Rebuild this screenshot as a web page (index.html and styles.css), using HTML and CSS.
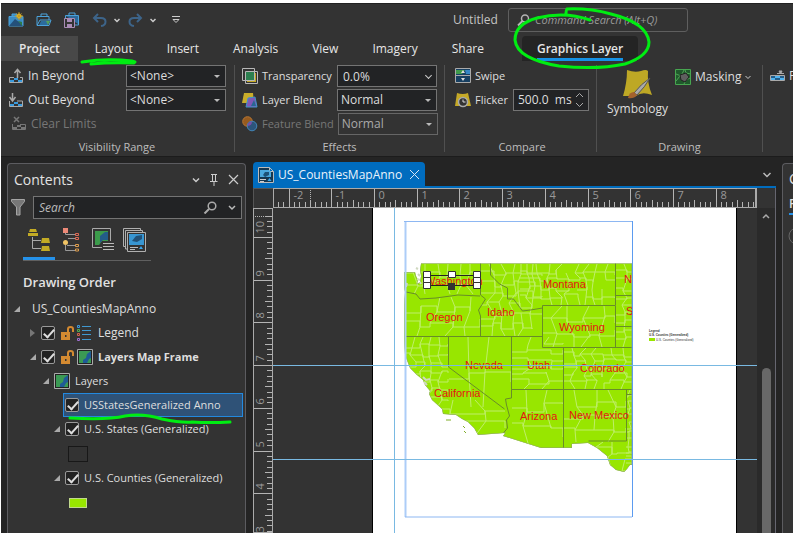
FILE: index.html
```html
<!DOCTYPE html>
<html lang="en">
<head>
<meta charset="utf-8">
<title>Untitled</title>
<link rel="stylesheet" href="styles.css">
</head>
<body>
<div class="app">
  <header class="titlebar">
    <div class="quick">
      <button class="qbtn" aria-label="New project"><svg width="16" height="16" viewBox="0 0 16 16"><path d="M4 4V2h5v2M1 4.500h14V14H1z" fill="#3c8cc4" stroke="#4ba3dc"/><path d="M1 14l6-7 4 3 4 4z" fill="#24507a"/><path d="M10 9l4 1v4z" fill="#2f7a45"/><circle cx="11" cy="4" r="2.500" fill="#e8bd2c"/><path d="M11 0v8M7 4h8M8.500 1.500l5 5M13.500 1.500l-5 5" stroke="#c79c1f"/></svg></button>
      <button class="qbtn" aria-label="Open"><svg width="16" height="16" viewBox="0 0 16 16"><path d="M5 4V2h6v2M1 13V4.500h12V8M1 13.500L4 8h11l-2 5.500z" fill="none" stroke="#4ba3dc"/><path d="M5 9h9l-2 4H3z" fill="#2c6b9c"/><path d="M10 9h4l-2 4z" fill="#55a05b"/></svg></button>
      <button class="qbtn" aria-label="Save"><svg width="16" height="16" viewBox="0 0 16 16"><path d="M5 3V1h6v2M1.500 7V3.500h13V13H11" fill="none" stroke="#4ba3dc"/><path d="M2 4h12v8z" fill="#2c6b9c"/><path d="M.500 6.500h10v9H.500z" fill="#333" stroke="#a98bb5"/><path d="M3 7h5v3H3zM3 12h5v3H3z" fill="#a98bb5"/></svg></button>
      <button class="qbtn undo" aria-label="Undo"><svg width="15" height="14" viewBox="0 0 15 14"><path d="M6 1L2 5l4 4M2 5h7c6 0 6 7 0 8" fill="none" stroke="#3d6489" stroke-width="2"/></svg></button>
      <svg class="chev" width="6" height="5" viewBox="0 0 6 5"><path d="M.500 1L3 3.500 5.500 1" fill="none" stroke="#ccc" stroke-width="1.500"/></svg>
      <button class="qbtn" aria-label="Redo"><svg width="15" height="14" viewBox="0 0 15 14"><path d="M9 1l4 4-4 4M13 5H6C0 5 0 12 6 13" fill="none" stroke="#3d6489" stroke-width="2"/></svg></button>
      <svg class="chev" width="6" height="5" viewBox="0 0 6 5"><path d="M.500 1L3 3.500 5.500 1" fill="none" stroke="#ccc" stroke-width="1.500"/></svg>
      <button class="qbtn custom" aria-label="Customize"><svg width="8" height="8" viewBox="0 0 8 8"><path d="M0 .500h8M1 3.500h6L4 6.500z" fill="none" stroke="#ccc"/></svg></button>
    </div>
    <span class="doc-title">Untitled</span>
    <label class="command"><svg width="13" height="12" viewBox="0 0 13 12"><circle cx="8" cy="4.500" r="3.500" fill="none" stroke="#b4b4b4" stroke-width="1.500"/><path d="M5.500 7L1 11.500" stroke="#b4b4b4" stroke-width="2"/></svg><input type="text" placeholder="Command Search (Alt+Q)" aria-label="Command Search"></label>
  </header>

  <nav class="tabs">
    <a href="#" class="project">Project</a><a href="#">Layout</a><a href="#">Insert</a><a href="#">Analysis</a><a href="#">View</a><a href="#">Imagery</a><a href="#">Share</a><a href="#" class="active"><span>Graphics Layer</span></a>
  </nav>

  <section class="ribbon">
    <div class="group">
      <div class="rows">
        <div class="row"><svg width="16" height="16" viewBox="0 0 16 16"><path d="M9.500 10V2M6.500 5l3-3.500L12.500 5" fill="none" stroke="#aaa" stroke-width="1.500"/><path d="M6 9.500H1.500v5h13v-5H12" fill="none" stroke="#aaa"/><path d="M2 12h4v2H2zM6 10h4v2H6zM10 12h4v2h-4z" fill="#3b9bdd"/></svg><label for="in">In Beyond</label><div class="pick"><select id="in"><option>&lt;None&gt;</option></select></div></div>
        <div class="row"><svg width="16" height="16" viewBox="0 0 16 16"><path d="M4.500 1v8M1.500 5l3 4 3-4" fill="none" stroke="#aaa" stroke-width="1.500"/><path d="M1.500 9v5.500h13V9H9" fill="none" stroke="#aaa"/><path d="M2 12h4v2H2zM6 10h4v2H6zM10 12h4v2h-4z" fill="#3b9bdd"/></svg><label for="out">Out Beyond</label><div class="pick"><select id="out"><option>&lt;None&gt;</option></select></div></div>
        <button class="row off clear" disabled><svg width="16" height="16" viewBox="0 0 16 16"><path d="M3 1l5 5M8 1L3 6" stroke="#777" stroke-width="1.500"/><path d="M1.500 8v5.500h13V8.500H9" fill="none" stroke="#777"/><path d="M2 11h4v2H2zM6 9h4v2H6zM10 11h4v2h-4z" fill="#777"/></svg>Clear Limits</button>
      </div>
      <h2>Visibility Range</h2>
    </div>
    <div class="group effects">
      <div class="rows">
        <div class="row"><svg width="16" height="16" viewBox="0 0 16 16"><path d="M5 5h9v9H5z" fill="#c4a823"/><path d="M4 4h8v9H4z" fill="#2c7f50"/><path d="M.500.500h12v12H.500zM3.500 3.500h12v12h-12z" fill="none" stroke="#b8b8b8"/></svg><label for="tr">Transparency</label><div class="pick thin"><input id="tr" type="text" value="0.0%"></div></div>
        <div class="row"><svg width="16" height="16" viewBox="0 0 16 16"><path d="M2 1l9 0 1 10-12 0z" fill="#c9ad2b"/><path d="M6 6l7-1 2 10H4z" fill="#8157b5" stroke="#3d95cc"/><path d="M12 8l2 6H9z" fill="#276793"/></svg><label for="lb">Layer Blend</label><div class="pick"><select id="lb"><option>Normal</option></select></div></div>
        <div class="row off"><svg width="16" height="16" viewBox="0 0 16 16"><circle cx="5.500" cy="5.500" r="4.800" fill="#965b20" stroke="#b87633"/><circle cx="10" cy="10" r="4.800" fill="#2c557c" stroke="#4386b8"/><path d="M5.500 10q0-4 4.500-4.500 0 4-4.500 4.500z" fill="#7a4fa8"/></svg><label for="fb">Feature Blend</label><div class="pick"><select id="fb" disabled><option>Normal</option></select></div></div>
      </div>
      <h2>Effects</h2>
    </div>
    <div class="group compare">
      <div class="rows">
        <button class="row"><svg width="16" height="16" viewBox="0 0 16 16"><path d="M1 1h14v14H1z" fill="#173f61"/><path d="M1 2h9l-3 4H1z" fill="#3f9b4c"/><path d="M10 2h5v4h-4z" fill="#3686c4"/><path d="M.500.500h15v14H.500zM0 7.500h16" fill="none" stroke="#aaa"/><path d="M8 2l2 3H6zM8 13l2-3H6z" fill="#ddd"/></svg>Swipe</button>
        <div class="row"><svg width="16" height="16" viewBox="0 0 16 16"><path d="M2 1q6 2 11 0l3 13H0z" fill="#c5a927"/><circle cx="8" cy="10" r="4.500" fill="#333" stroke="#aaa" stroke-width="1.500"/><path d="M8 7.500V10h2.500" fill="none" stroke="#ddd"/></svg><label for="fl">Flicker</label><div class="spin"><input id="fl" type="text" value="500.0  ms"><svg width="9" height="16" viewBox="0 0 9 16"><path d="M1 5l3.500-3.500L8 5M1 11l3.500 3.500L8 11" fill="none" stroke="#aaa" stroke-width="1"/></svg></div></div>
      </div>
      <h2>Compare</h2>
    </div>
    <div class="group drawing">
      <div class="tools">
        <button class="symbology"><svg width="30" height="30" viewBox="0 0 30 30"><path d="M4 1q8 3 14 1 5-2 7 0-1 12 4 24-10-4-16 1H0Q4 14 4 1z" fill="#bea825"/><path d="M27 9q-9 6-16 15l3 2Q22 18 27 9z" fill="#aaa" stroke="#555"/><path d="M11 23q-5 0-6 6 6 1 9-3z" fill="#a4622d"/></svg>Symbology</button>
        <button class="masking"><svg width="16" height="16" viewBox="0 0 16 16"><path d="M.500.500h15v15H.500z" fill="#205a2c" stroke="#47a650"/><path d="M1 5l5 2 3-6M1 12l4-5M9 15l2-4 4-2M10 1l1 3 5 1" fill="none" stroke="#4fa556"/><path d="M5 6l6-2 3 4-4 5-4-2z" fill="#5f5f5f" stroke="#222"/></svg>Masking<svg class="chev" width="6" height="5" viewBox="0 0 6 5"><path d="M.500 1L3 3.500 5.500 1" fill="none" stroke="#ccc"/></svg></button>
      </div>
      <h2>Drawing</h2>
    </div>
    <div class="group cut"><button class="row"><svg width="15" height="14" viewBox="0 0 15 14"><path d="M7 4.500h7M9 2h3l-1.500 3z" fill="#aaa" stroke="#aaa"/><path d="M.500 6.500h14v5H.500z" fill="#245d88" stroke="#aaa"/><path d="M1 9h4v2H1zM5 7h5v2H5zM10 9h4v2h-4z" fill="#51b3ef"/></svg>F</button></div>
  </section>

  <main class="work">
    <aside class="contents">
      <header><h1>Contents</h1>
        <svg width="52" height="14" viewBox="0 0 52 14"><path d="M2 5.500l3 3 3-3" fill="none" stroke="#ccc" stroke-width="1.500"/><path d="M21.500 2v6.500M24.500 2v6M20 1.500h6M19 8.500h7.500M23 9v4" fill="none" stroke="#ccc"/><path d="M38 2l9 9M47 2l-9 9" stroke="#ccc" stroke-width="1.200"/></svg>
      </header>
      <div class="find"><svg width="14" height="17" viewBox="0 0 14 17"><path d="M.500.500h13v2L9 8v8H5.500V8L.500 2.500z" fill="#777" stroke="#a5a5a5"/></svg>
        <label class="searchbox"><input type="text" placeholder="Search" aria-label="Search"><svg width="36" height="13" viewBox="0 0 36 13"><circle cx="9" cy="5" r="3.800" fill="none" stroke="#aaa" stroke-width="1.500"/><path d="M6 8l-4.500 4.500" stroke="#aaa" stroke-width="2"/><path d="M26 5l3 3 3-3" fill="none" stroke="#bbb" stroke-width="1.500"/></svg></label></div>
      <div class="views">
        <button class="on" aria-label="List by drawing order"><svg width="24" height="24" viewBox="0 0 24 24"><path d="M3 1h6l1 3H2zM1 5h10v3H1z" fill="#c3ab25"/><path d="M5.500 9v11.500H14M5.500 12.500H14" fill="none" stroke="#aaa"/><path d="M15 10h7l1 5h-9zM15 18h7l1 5h-9z" fill="#c3ab25"/></svg></button>
        <button aria-label="List by data source"><svg width="24" height="24" viewBox="0 0 24 24"><path d="M6.500 5v1.500H16M9 10.500h7M6.500 17v5.500H16M8 17.500h8" fill="none" stroke="#999"/><path d="M4 0h5v5H4z" fill="#ed8a78"/><path d="M16.500 5.500h3v2h-3zM16.500 9.500h3v2h-3z" fill="none" stroke="#de6a55"/><circle cx="6.500" cy="14.500" r="2.500" fill="#f1c465"/><path d="M16.500 16.500h3v2h-3zM16.500 21h3v2h-3z" fill="none" stroke="#dd9d4d"/></svg></button>
        <button aria-label="List map frames"><svg width="24" height="24" viewBox="0 0 24 24"><path d="M11 19.500H1.500v-19h18V13" fill="none" stroke="#aaa"/><path d="M4 3h13v10H11l-3 4H4z" fill="#3b9b4b"/><path d="M9 8l5-4 3 0v8h-5l-3 3z" fill="#235c89"/><path d="M12 15.500h11M12 18.500h11M12 21.500h11" stroke="#bbb"/></svg></button>
        <button aria-label="List map series"><svg width="24" height="24" viewBox="0 0 24 24"><path d="M3 18.500H.500V.500h17V3M5 21H2.500V2.500h17V5M4.500 4.500h18v19h-18z" fill="none" stroke="#b0b0b0"/><path d="M6 6h15v11H6z" fill="#3896d2"/><path d="M9 13l4-5 6-1v4l-5 3z" fill="#225177"/><path d="M7 19.500h8M7 21.500h5" stroke="#bbb"/><path d="M18 18l2 3h-4z" fill="#3ba8ef"/></svg></button>
      </div>
      <h2>Drawing Order</h2>
      <ul class="tree">
        <li class="l0"><i class="open"></i><span>US_CountiesMapAnno</span></li>
        <li class="l1"><i class="shut"></i><input type="checkbox" id="c1" checked><svg width="15" height="14" viewBox="0 0 15 14"><path d="M8 7V3q0-2 2.500-2T13 3v3" fill="none" stroke="#d48a31" stroke-width="2"/><path d="M1 6h9v8H1z" fill="#d48a31"/><path d="M5 9h1.500v2H5z" fill="#333"/></svg><svg width="14" height="16" viewBox="0 0 14 16"><path d="M5 1.500h9M5 5.500h9M5 9.500h9M5 14.500h9" stroke="#4098d0"/><path d="M.500.500h2v2h-2z" stroke="#3a9be0" fill="none"/><path d="M.500 4.500h2v2h-2z" stroke="#4fae50" fill="none"/><path d="M.500 8.500h2v2h-2z" stroke="#d4604b" fill="none"/><path d="M.500 13.500h2v2h-2z" stroke="#9f6fd0" fill="none"/></svg><label for="c1" class="legend-label">Legend</label></li>
        <li class="l1"><i class="open"></i><input type="checkbox" id="c2" checked><svg width="15" height="14" viewBox="0 0 15 14"><path d="M8 7V3q0-2 2.500-2T13 3v3" fill="none" stroke="#d48a31" stroke-width="2"/><path d="M1 6h9v8H1z" fill="#d48a31"/><path d="M5 9h1.500v2H5z" fill="#333"/></svg><svg width="16" height="16" viewBox="0 0 16 16"><path d="M.500.500h15v15H.500z" fill="#222" stroke="#aaa"/><path d="M2 2h12v12H2z" fill="#3b9a54"/><path d="M14 2l-4 3-1 4-3 2v3h4l2-4 2-1z" fill="#1f5b96"/></svg><label for="c2" class="bold">Layers Map Frame</label></li>
        <li class="l2"><i class="open"></i><svg width="16" height="16" viewBox="0 0 16 16"><path d="M.500.500h15v15H.500z" fill="#222" stroke="#aaa"/><path d="M2 2h12v12H2z" fill="#3b9a54"/><path d="M14 2l-4 3-1 4-3 2v3h4l2-4 2-1z" fill="#1f5b96"/></svg><span>Layers</span></li>
        <li class="l3 selected"><input type="checkbox" id="c3" checked><label for="c3">USStatesGeneralized Anno</label></li>
        <li class="l3"><i class="open"></i><input type="checkbox" id="c4" checked><label for="c4">U.S. States (Generalized)</label></li>
        <li class="l3 patch"><b class="hollow"></b></li>
        <li class="l3"><i class="open"></i><input type="checkbox" id="c5" checked><label for="c5">U.S. Counties (Generalized)</label></li>
        <li class="l3 patch"><b class="lime"></b></li>
      </ul>
    </aside>

    <section class="document">
      <div class="doctabs"><button class="doctab"><svg width="16" height="16" viewBox="0 0 16 16"><path d="M.500.500h11l4 4v11H.500zM11.500.500v4h4" fill="#173850" stroke="#bbb"/><path d="M2 3h9l2 2v5H2z" fill="#4ba9de"/><path d="M5 8l2-3h4v3l-4 2z" fill="#1d5277"/><path d="M2 12.500h6M2 14.500h4" stroke="#ccc"/><path d="M11.500 11l2 3h-4z" fill="#3ba8ef"/></svg>US_CountiesMapAnno<svg width="11" height="11" viewBox="0 0 11 11"><path d="M1 1l9 9M10 1l-9 9" stroke="#d6e6f5"/></svg></button>
        <svg width="10" height="8" viewBox="0 0 10 8"><path d="M1.500 2L5 5.500 8.500 2" fill="none" stroke="#bbb" stroke-width="1.500"/></svg></div>
      <div class="canvas">
        <div class="corner"></div>
        <svg class="hruler" id="hruler"></svg>
        <div class="corner"></div>
        <svg class="vruler" id="vruler"></svg>
        <svg class="sheet" id="sheet">
          <g transform="translate(-273 -208)">
            <path d="M373 200h363v700H373z" fill="#fff"/>
            <path d="M372.500 200v700M736.500 200v700" stroke="#000"/>
            <defs>
              <clipPath id="land"><path d="M421 263.500H632V465h-2l-3 4-3 3-8-2-6-5-3-9-10-8-9-5-16 1v4h-31l-38-12 2-3-27 2-4-7-6-6-6-3-6-4-13-1-1-5-10-9-3-6 1-3-5-6-2-5-6-5-7-7-2-5-3-8-1-16V305l1-13-1-5v-15h11l1 4 2 4-1 4 3-2 1-6-1-6z"/></clipPath>
            </defs>
            <g clip-path="url(#land)">
              <path d="M400 260h235v215H400z" fill="#98e600"/>
              <g id="counties" fill="none" stroke="#bfee6a" stroke-width="1"></g>
              <path d="M406 292l10 2 4 5 16-1 22-3 22 1M480.500 263v32l5 4-7 11 2 6v20M490.500 263v12l9 9 8 4v11h6l9 12 8-1 12-2M405 336.500h137M542.500 305.500h73v42h-73zM615.500 263v42M615 295.500h17M615 326.500h17M615 347.500h17M448.500 336v31l56 42M511.500 336v62l-6 1 1 6 3 11-3 4 1 8-4 5M511 389.500h121M563.500 347v101M626.500 389v52h-38M626 394.500h6" fill="none" stroke="#688d28"/>
              <path d="M421 263.500H632V465h-2l-3 4-3 3-8-2-6-5-3-9-10-8-9-5-16 1v4h-31l-38-12 2-3-27 2-4-7-6-6-6-3-6-4-13-1-1-5-10-9-3-6 1-3-5-6-2-5-6-5-7-7-2-5-3-8-1-16V305l1-13-1-5v-15h11l1 4 2 4-1 4 3-2 1-6-1-6z" fill="none" stroke="#8f9f78"/>
            </g>
            <path d="M418 274l2 2M417 279l3 1M420 282l1 2M423 377l3 3 4-1M424 382l3 3M406 287l1-4M416 268l2 1" fill="none" stroke="#cfd8c0" stroke-width="2"/>
            <path d="M446 420l5 0M463 426l2 2M464 431l2 2" stroke="#80ad28"/>
            <g class="states">
              <text x="425" y="285">Washington</text><text x="426" y="321">Oregon</text><text x="487" y="316">Idaho</text><text x="543" y="288">Montana</text><text x="559" y="331">Wyoming</text><text x="465" y="369">Nevada</text><text x="527" y="369">Utah</text><text x="580" y="372">Colorado</text><text x="434" y="397">California</text><text x="520" y="420">Arizona</text><text x="569" y="419">New Mexico</text>
              <svg x="600" y="260" width="32" height="70"><text x="24" y="23">No</text><text x="26" y="55">So</text></svg>
            </g>
            <path d="M405.500 517V221.500" stroke="#adcdf8" stroke-width="2"/><path d="M404 221.500h228M405 517h227" stroke="#8db7f2"/><path d="M632.500 221v296" stroke="#5b9bf0"/>
            <path d="M394.500 200v600M273 365.500h2000M273 459.500h2000" stroke="#79b9e2"/>
            <path d="M427 275.500h50M427 285.500h50" stroke="#222"/>
            <path d="M423.500 271.500h7v6h-7zM423.500 277.500h7v5h-7zM423.500 282.500h7v6h-7zM473.500 271.500h7v6h-7zM473.500 277.500h7v5h-7zM473.500 282.500h7v6h-7zM448.500 271.500h7v6h-7z" fill="#fff" stroke="#333"/><path d="M448 283h7v7h-7z" fill="#333"/>
            <g class="legend"><text x="649" y="332" class="bold">Legend</text><text x="649" y="336" class="bold">U.S. Counties (Generalized)</text><text x="656" y="341">U.S. Counties (Generalized)</text></g><path d="M649 338h6v3h-6z" fill="#98e600"/>
          </g>
        </svg>
        <div class="scroll"><svg width="8" height="6" viewBox="0 0 8 6"><path d="M1 5l3-3 3 3" fill="none" stroke="#aaa" stroke-width="1.500"/></svg><div class="thumb"></div></div>
      </div>
    </section>
    <aside class="side"><h1>C</h1><a href="#">P</a><svg width="18" height="18" viewBox="0 0 18 18"><circle cx="9" cy="9" r="8" fill="none" stroke="#666"/><path d="M10 5L6 9l4 4" fill="none" stroke="#666"/></svg></aside>
  </main>

  <svg class="ink" aria-hidden="true"><path d="M82 62q25-4 50-1l3 1M91 64q20-2 43-1" stroke-width="3"/><path d="M566 15q0-5 1-6 22-1 44 5 36 9 38 28 0 14-24 22-28 6-66 2-42-7-44-26 0-16 22-22 28-7 53 2" stroke-width="3"/><path d="M70 418q38 2 55-2 18-3 37 3 20 4 30 3 18 1 38 0" stroke-width="3"/></svg>
</div>
<script src="map.js"></script>
</body>
</html>
```
FILE: map.js
```js
const NS = "http://www.w3.org/2000/svg";
function add(parent, name, attrs, text) {
  const node = document.createElementNS(NS, name);
  for (const key in attrs) node.setAttribute(key, attrs[key]);
  if (text !== undefined) node.textContent = text;
  parent.appendChild(node);
}

// One inch on the layout page in screen pixels.
const INCH = 42.7;

function drawRulers() {
  const h = document.getElementById("hruler");
  const v = document.getElementById("vruler");
  let hd = "", vd = "";
  for (let i = -19; i < 73; i++) {
    const x = Math.round(100 + i * INCH / 8) + 0.5;
    if (x > h.clientWidth) break;
    const len = i % 8 === 0 ? 19 : i % 4 === 0 ? 8 : 6;
    hd += `M${x} 19v${-len}`;
    if (i % 8 === 0) add(h, "text", { x: x + 4, y: 10 }, i / 8);
  }
  for (let i = -4; i < 120; i++) {
    const y = Math.round(28 + i * INCH / 8) + 0.5;
    if (y > v.clientHeight + 20) break;
    const len = i % 8 === 0 ? 19 : i % 4 === 0 ? 8 : 6;
    vd += `M19 ${y}h${-len}`;
    if (i % 8 === 0) add(v, "text", { transform: `translate(10 ${y - 4}) rotate(-90)` }, 10 - i / 8);
  }
  add(h, "path", { d: hd });
  add(v, "path", { d: vd });
  add(h, "path", { d: "M36.5 1v18", "stroke-dasharray": "1 1" });
  add(v, "path", { d: "M1 7.5h18", "stroke-dasharray": "1 1" });
}

// County mesh: irregular cells inside each block [x, y, width, height, cell width, cell height].
const blocks = [
  [405, 264, 75, 30, 11, 9], [405, 297, 75, 39, 15, 12], [481, 264, 61, 72, 11, 10],
  [520, 264, 95, 41, 10, 8], [543, 306, 72, 41, 15, 13], [616, 264, 17, 83, 9, 8],
  [405, 337, 43, 72, 9, 9], [449, 337, 62, 70, 20, 34], [512, 337, 51, 52, 17, 8],
  [564, 348, 69, 41, 10, 7], [430, 400, 75, 36, 26, 12], [512, 390, 51, 60, 18, 22],
  [564, 390, 62, 52, 14, 12], [626, 390, 8, 80, 5, 6], [590, 442, 42, 35, 12, 10]
];
let seed = 71;
function rand() {
  seed = (seed * 16807) % 2147483647;
  return seed / 2147483647;
}
function drawCounties() {
  const target = document.getElementById("counties");
  let d = "";
  for (const [x, y, w, h, cw, ch] of blocks) {
    const cols = Math.round(w / cw), rows = Math.round(h / ch), pts = [];
    for (let r = 0; r <= rows; r++) {
      pts[r] = [];
      for (let c = 0; c <= cols; c++) {
        const jx = c && c < cols ? (rand() - 0.5) * cw * 0.8 : 0;
        const jy = r && r < rows ? (rand() - 0.5) * ch * 0.7 : 0;
        pts[r][c] = [Math.round(x + c * w / cols + jx), Math.round(y + r * h / rows + jy)];
      }
    }
    for (let r = 0; r <= rows; r++) for (let c = 0; c <= cols; c++) {
      const [px, py] = pts[r][c];
      if (c < cols && r && r < rows && rand() > 0.15) d += `M${px} ${py}H${pts[r][c + 1][0]}V${pts[r][c + 1][1]}`;
      if (r < rows && c && c < cols && rand() > 0.15) d += `M${px} ${py}L${pts[r + 1][c]}`;
    }
  }
  add(target, "path", { d });
}
drawRulers();
drawCounties();
```
FILE: styles.css
```css
* { box-sizing: border-box; }
body { margin: 0; padding: 3px 0 4px 1px; height: 100vh; background: #fff; font: 12px/16px "Open Sans", "Noto Sans", sans-serif; color: #dedede; }
.app { position: relative; height: 100%; display: flex; flex-direction: column; overflow: hidden; background: #333; }
button, input, select { font: inherit; color: inherit; background: none; border: 0; padding: 0; margin: 0; outline: 0; min-width: 0; }
a { color: inherit; text-decoration: none; }
h1, h2, ul { margin: 0; padding: 0; font-weight: 400; font-size: 12px; }
svg { flex: none; display: block; }
.bold { font-weight: 700; }

.titlebar { height: 33px; flex: none; display: flex; align-items: center; border-top: 1px solid #222; }
.quick { flex: 0 0 452px; display: flex; align-items: center; padding-left: 7px; }
.qbtn { margin-right: 12px; }
.qbtn.undo, .qbtn.undo ~ .qbtn { margin-right: 7px; }
.chev { margin-right: 8px; }
.qbtn.custom { margin-left: 8px; }
.doc-title { width: 55px; color: #c4c4c4; font-size: 12px; }
.command { width: 180px; height: 24px; display: flex; align-items: center; gap: 5px; padding-left: 8px; border: 1px solid #5f5f5f; border-radius: 3px; }
.command input { flex: 1; font-style: italic; font-size: 11px; }
::placeholder { color: #999; opacity: 1; }

.tabs { height: 25px; flex: none; display: flex; font-size: 12px; line-height: 26px; color: #e6e6e6; }
.tabs a { padding: 0 17px; }
.tabs .project { padding: 0 18px; background: #484848; font-weight: 600; }
.tabs .active { margin-left: 21px; padding: 0 15px; background: #242424; border-radius: 4px 4px 0 0; font-weight: 600; }
.tabs .active span { display: block; height: 25px; border-bottom: 3px solid #1592e6; }

.ribbon { flex: none; height: 95px; display: grid; grid-template-columns: 234px 210px 152px 166px 1fr; }
.group { display: flex; flex-direction: column; justify-content: space-between; min-width: 0; margin: 4px 0; padding: 0 8px 0 7px; border-right: 1px solid #505050; }
.group h2 { text-align: center; font-size: 11px; line-height: 10px; color: #bdbdbd; }
.rows { display: flex; flex-direction: column; gap: 2px; }
.row { display: flex; align-items: center; gap: 4px; height: 22px; font-size: 12px; white-space: nowrap; }
.row label { flex: 1; }
.row.off { color: #777; }
.row.clear { padding-left: 3px; }
.pick { position: relative; flex: none; width: 100px; height: 22px; border: 1px solid #747474; background: #222325; color: #ddd; font-size: 12px; }
.pick select, .pick input { appearance: none; width: 100%; height: 100%; padding: 0 16px 0 5px; opacity: 1; }
.pick::after { content: ""; position: absolute; right: 5px; top: 9px; border: 3px solid transparent; border-top-color: #bbb; pointer-events: none; }
.pick.thin::after { width: 4px; height: 4px; top: 7px; border-width: 0 1px 1px 0; border-color: #ccc; transform: rotate(45deg); }
.pick select { padding-left: 3px; }
.off .pick { background: #333; border-color: #666; color: #aaa; }
.effects { padding: 0 7px; }
.effects .row { font-size: 11px; }
.compare { padding: 0 7px 0 10px; }
.spin { flex: none; width: 76px; height: 22px; display: flex; align-items: center; border: 1px solid #747474; background: #222325; padding: 0 4px; }
.compare .row { font-size: 11px; }
.spin input { flex: 1; font-size: 12px; white-space: pre; }
.drawing { padding: 0 10px; }
.tools { display: flex; gap: 7px; align-items: flex-start; }
.symbology { display: flex; flex-direction: column; align-items: center; gap: 2px; padding-top: 4px; }
.masking { display: flex; align-items: center; gap: 4px; height: 24px; }
.masking .chev { margin: 0; }
.cut { border: 0; overflow: hidden; padding-right: 0; }

.work { flex: 1; min-height: 0; display: flex; background: #242424; border-top: 1px solid #1c1c1c; padding: 6px 0 0 6px; overflow: hidden; }
.contents { flex: 0 0 239px; background: #333; border: 1px solid #5c5c60; border-bottom: 0; border-radius: 4px 4px 0 0; overflow: hidden; }
.contents header { height: 32px; display: flex; align-items: center; justify-content: space-between; padding: 0 2px 0 6px; }
.contents h1, .side h1 { font-size: 14px; color: #e2e2e2; }
.find { display: flex; align-items: center; gap: 8px; padding: 0 3px; }
.searchbox { flex: 1; height: 23px; display: flex; align-items: center; background: #222325; border: 1px solid #747474; padding: 0 2px 0 5px; }
.searchbox input { flex: 1; font-style: italic; }
.find ::placeholder { color: #bbb; }
.views { display: flex; width: 128px; margin: 9px 0 0 15px; border-bottom: 1px solid #606060; }
.views button { width: 32px; height: 32px; padding-left: 4px; }
.views .on { border-bottom: 3px solid #2592ea; }
.views button svg { margin-bottom: 8px; }
.views .on svg { margin-bottom: 5px; }
.contents h2 { margin: 12px 0 0 15px; font-size: 13px; line-height: 18px; color: #e2e2e2; font-weight: 600; }
.tree { list-style: none; padding-top: 6px; font-size: 11px; }
.tree li { height: 24px; display: flex; align-items: center; gap: 5px; white-space: nowrap; }
.tree .l0 { padding-left: 6px; gap: 12px; font-size: 12px; }
.tree .l1 { padding-left: 22px; }
.tree .l1 svg + svg { margin-left: -3px; }
.tree .legend-label { margin-left: 2px; font-size: 12px; }
.tree .l2 { padding-left: 35px; }
.tree .l3 { padding-left: 46px; }
.tree .selected { margin: 0 2px 0 55px; padding-left: 1px; border: 1px solid #2389df; background: #2f5277; }
.tree .patch { padding-left: 60px; height: 25px; }
.tree i { width: 6px; height: 6px; }
.tree .open { border: 3px solid; border-color: transparent #aaa #aaa transparent; }
.tree .shut { height: 8px; border: 4px solid transparent; border-left: 5px solid #777; border-right: 0; }
.tree input { position: relative; appearance: none; flex: none; width: 14px; height: 14px; border: 1px solid #999; border-radius: 2px; background: #222; }
.tree input:checked::after { content: ""; position: absolute; left: 4px; top: 0; width: 4px; height: 9px; border: solid #ddd; border-width: 0 2px 2px 0; transform: rotate(42deg); }
.hollow { width: 20px; height: 16px; border: 1px solid #181818; }
.lime { width: 18px; height: 10px; margin-left: 1px; background: #98e600; border: 1px solid #c1d98c; }

.document { flex: 1; min-width: 0; margin-left: 7px; display: flex; flex-direction: column; }
.doctabs { display: flex; align-items: center; justify-content: space-between; height: 25px; padding-right: 4px; border-bottom: 2px solid #006cbe; }
.doctab { display: flex; align-items: center; gap: 4px; height: 25px; padding: 0 5px; background: #006cbe; border-radius: 4px 4px 0 0; color: #eaf3fb; }
.doctab svg:last-child { margin-left: 3px; }
.canvas { flex: 1; min-height: 0; display: grid; grid-template: 20px 1fr / 20px 1fr 18px; border-right: 1px solid #666670; background: #333; }
.hruler, .vruler, .sheet { width: 100%; height: 100%; min-width: 0; min-height: 0; overflow: hidden; }
.hruler { border: 1px solid #aaa; border-right-width: 2px; }
.vruler { border: 1px solid #aaa; }
.hruler path, .vruler path { stroke: #b4b4b4; fill: none; }
.hruler text, .vruler text { font-size: 11px; fill: #999; }
.corner:first-child { border-left: 1px solid #555; border-top: 1px solid #555; }
.states text { font: 11px "Liberation Sans", Arial, sans-serif; fill: #e31414; }
.legend text { font-family: "Liberation Sans", Arial, sans-serif; font-size: 3px; fill: #333; }
.scroll { background: #2a2a2a; display: flex; flex-direction: column; align-items: center; padding-top: 5px; }
.thumb { width: 9px; flex: 1; margin-top: 149px; background: #686868; border-radius: 5px 5px 0 0; }
.side { flex: 0 0 11px; margin-left: 6px; background: #333; border: 1px solid #5c5c60; border-width: 1px 0 0 1px; border-radius: 4px 0 0 0; padding: 7px 0 0 6px; overflow: hidden; }
.side a { display: block; width: 30px; margin-top: 9px; padding-bottom: 1px; font-weight: 600; border-bottom: 2px solid #2592ea; }
.side svg { margin: 12px 0 0 -1px; }
.ink { position: absolute; left: -1px; top: -3px; width: 100%; height: 537px; pointer-events: none; fill: none; stroke: #00ed12; stroke-linecap: round; }
```
